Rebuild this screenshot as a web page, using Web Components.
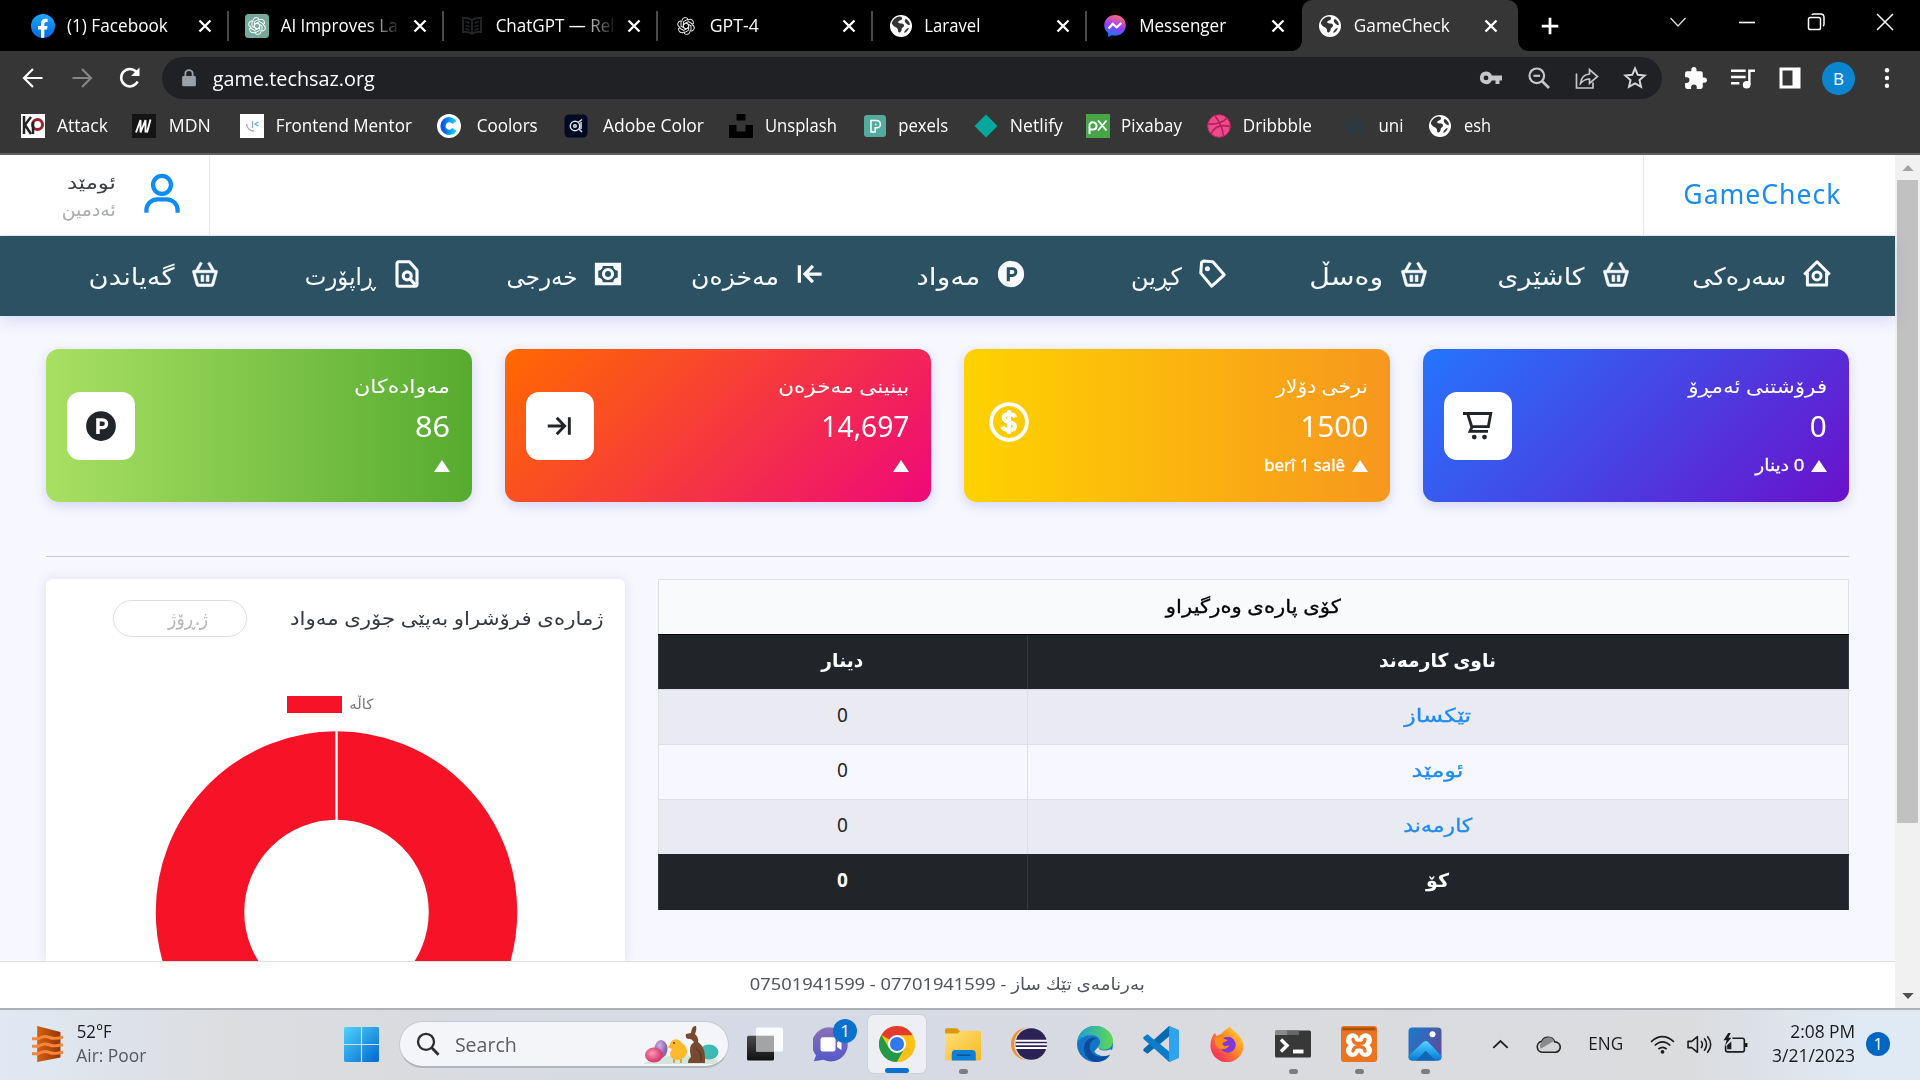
<!DOCTYPE html>
<html lang="ckb">
<head>
<meta charset="utf-8">
<title>GameCheck</title>
<style>
  body { margin: 0; width: 1920px; height: 1080px; overflow: hidden; background: #000; font-family: "Open Sans", "Noto Sans", sans-serif; }
</style>
</head>
<body>
<desk-top></desk-top>
<script>
const define = (tag, css, html) => customElements.define(tag, class extends HTMLElement {
  connectedCallback() {
    if (this.shadowRoot) return;
    this.attachShadow({ mode: 'open' }).innerHTML = `<style>*{box-sizing:border-box}${css}</style>` + (typeof html === 'function' ? html(this) : html);
  }
});
const a = (el, n, d = '') => el.getAttribute(n) ?? d;

const globe = '<circle cx="12" cy="12" r="11" fill="#fff"/><path d="M4 6.5C6 4 8.500 2.800 11 2.600c2.200.5 2.700 2 1.500 3.200-1.300 1-3 .9-3.300 2.200-.3 1.500 2 1.300 3.800 1.600 2.300.5 2.600 2.300 1.400 3.500-.9.9-1.800 1-1.800 2.500 0 1.300-.6 2.300-1.700 2.800-1.600.3-1.900-1-1.900-2.400 0-1.600-1.400-2-2.800-2.900C4.500 12 3.200 10.500 2.800 9.500 3 8.300 3.400 7.300 4 6.500zM17 5c2 1 3.600 3.100 4 5.500-1 .9-2.200.6-3-.4-.9-1.200-2-1.500-2.200-2.900C15.700 6 16.200 5.200 17 5zM19.800 14c-.6 2-2 4-4.300 5-.4-1 .1-2 .9-2.800.9-1 1.700-2 3.400-2.200z" fill="#333"/>';
const knot = c => `<g fill="none" stroke="${c}" stroke-width="1.250">${[0,60,120,180,240,300].map(r => `<path transform="rotate(${r} 12 12)" d="M12 8.200L15.300 10.100V17.300L9.500 20.600M6.800 6.800V5.500Q7.200 1.500 11 1.400Q13 1.500 14.500 3"/>`).join('')}</g>`;
const basket = '<path fill="currentColor" stroke="currentColor" stroke-width=".5" d="M21 9h-1.420l-3.712-6.496-1.736.992L17.277 9H6.723l3.146-5.504-1.737-.992L4.420 9H3a1 1 0 0 0-.965 1.263l2.799 10.264A2.005 2.005 0 0 0 6.764 22h10.473c.898 0 1.692-.605 1.930-1.475l2.799-10.263A1 1 0 0 0 21 9zm-3.764 11H6.764L4.310 11h15.380l-2.454 9zM8.800 13h2.200v5H8.800zm4.200 0h2.200v5H13z"/>';
const ICONS = {
  facebook: '<defs><linearGradient id="g" x2="0" y2="1"><stop stop-color="#1aa9f8"/><stop offset="1" stop-color="#0866e4"/></linearGradient></defs><circle cx="12" cy="12" r="12" fill="url(#g)"/><path fill="#fff" d="M10 23.800V15.500H7V12h3V9.500c0-3 1.700-4.800 4.500-4.800 1 0 2.100.2 2.100.2v3h-1.400c-1.400 0-1.900.9-1.900 1.800V12h3.200l-.5 3.500h-2.700v8.300z"/>',
  openai: '<rect width="24" height="24" rx="3.500" fill="#74a99b"/><g transform="translate(2.400 2.400) scale(.8)">' + knot('#fff') + '</g>',
  gpt: '<g transform="translate(2.400 2.400) scale(.8)">' + knot('#e8e8e8') + '</g>',
  book: '<g fill="none" stroke="#24262a" stroke-width="1.800"><path d="M12 6C9.500 4 6 3.500 3 4v14c3-.5 6.500 0 9 2 2.500-2 6-2.500 9-2V4c-3-.5-6.500 0-9 2v14M5.500 8l4 1M5.500 11.500l4 1M5.500 15l4 1M18.500 8l-4 1M18.500 11.500l-4 1M18.500 15l-4 1"/></g>',
  globe,
  messenger: '<defs><linearGradient id="g" x1=".3" x2=".6" y1="1" y2="0"><stop stop-color="#0a7cff"/><stop offset=".5" stop-color="#9a3cff"/><stop offset="1" stop-color="#ff6a70"/></linearGradient></defs><path fill="url(#g)" d="M12 1C5.900 1 1.200 5.500 1.200 11.300c0 3.400 1.500 6 3.900 7.900l.2 3.800 3.600-1.700c1 .2 2 .4 3.100.4 6.100 0 10.800-4.500 10.800-10.400S18.100 1 12 1z"/><path fill="none" stroke="#fff" stroke-width="2.200" d="M5.500 14.500l4.200-4.600 4 3.400 4.600-4.300"/>',
  x: '<path d="M6 6l12 12M18 6L6 18" stroke="#fff" stroke-width="2.600"/>',
  plus: '<path d="M12 3v18M3 12h18" stroke="#fff" stroke-width="3"/>',
  wdown: '<path d="M4.500 8l7.500 8 7.500-8" stroke="#ddd" stroke-width="1.300" fill="none"/>',
  wmin: '<path d="M4 12.500h16" stroke="#fff" stroke-width="1.600"/>',
  wmax: '<g fill="none" stroke="#fff" stroke-width="1.500"><rect x="4.500" y="7.500" width="12" height="12" rx="1.800"/><path d="M8 5q.5-1 2-1h6.500q3.500 0 3.500 3.500V14q0 1.500-1 2"/></g>',
  wx: '<path d="M4 4l16 16M20 4L4 20" stroke="#fff" stroke-width="1.500"/>',
  back: '<path d="M21.500 12H3.500M12 3l-9 9 9 9" fill="none" stroke="#fff" stroke-width="2.200"/>',
  fwd: '<path d="M2.500 12h18M12 3l9 9-9 9" fill="none" stroke="#858585" stroke-width="2.200"/>',
  reload: '<path d="M19.700 15.500A8.700 8.700 0 1 1 18.500 6" fill="none" stroke="#fff" stroke-width="2.500"/><path d="M21.500 1.500v8.500H13z" fill="#fff"/>',
  lock: '<rect x="4.500" y="9.500" width="15" height="12.500" rx="1.500" fill="#9aa0a6"/><path d="M8 10V6.500a4 4 0 0 1 8 0V10" fill="none" stroke="#9aa0a6" stroke-width="2"/>',
  key: '<path fill="#c4c6c9" fill-rule="evenodd" d="M7 5.500a6.300 6.300 0 1 0 5.900 9h3.600v3.500h4V14.500H23v-5H12.900A6.300 6.300 0 0 0 7 5.500zm0 4a2.400 2.400 0 1 1 0 4.800 2.400 2.400 0 0 1 0-4.800z"/>',
  zoom: '<g fill="none" stroke="#c4c6c9" stroke-width="2.200"><circle cx="9.800" cy="9.800" r="7.300"/><path d="M6.500 9.800h6.600"/><path d="M15 15l7 7" stroke-width="2.600"/></g>',
  share: '<g fill="none" stroke="#c4c6c9" stroke-width="1.700"><path d="M1.500 7.500V22H18v-5.500"/><path d="M5.500 17.500c.5-6 3.500-9 9-9.500V3.500l8 7-8 7V13c-4 0-6.500 1.500-9 4.500z"/></g>',
  star: '<path d="M12 2.500l2.800 6.300 6.900.7-5.200 4.600 1.500 6.700-6-3.500-6 3.500 1.500-6.700L2.300 9.500l6.900-.7z" fill="none" stroke="#d2d4d7" stroke-width="2"/>',
  puzzle: '<path fill="#fff" d="M20.500 11H19V7a2 2 0 0 0-2-2h-4V3.500a2.500 2.500 0 0 0-5 0V5H4a2 2 0 0 0-2 2v3.800h1.500a2.700 2.700 0 0 1 0 5.400H2V20a2 2 0 0 0 2 2h3.800v-1.500a2.700 2.700 0 0 1 5.400 0V22H17a2 2 0 0 0 2-2v-4h1.500a2.500 2.500 0 0 0 0-5z"/>',
  queue: '<path d="M1 4.500h14M1 10.500h14M1 16.500h8" stroke="#fff" stroke-width="2.300"/><circle cx="16" cy="18" r="3.700" fill="#fff"/><path d="M18.600 18V4.500H24" fill="none" stroke="#fff" stroke-width="2.300"/>',
  side: '<path fill="#fff" fill-rule="evenodd" d="M1.500 1.500h21v21h-21zM4.500 4.500v15h10v-15z"/>',
  dots: '<g fill="#fff"><circle cx="12" cy="3.500" r="2.400"/><circle cx="12" cy="12" r="2.400"/><circle cx="12" cy="20.500" r="2.400"/></g>',
  attack: '<rect width="24" height="24" fill="#fff"/><path d="M3 2v18M3 12l7-9M4 11l6 9" stroke="#222" stroke-width="2.500" fill="none"/><circle cx="16.500" cy="10.500" r="5" fill="none" stroke="#9c1f2d" stroke-width="3"/><path d="M12 8v12" stroke="#222" stroke-width="2.500"/>',
  mdn: '<rect width="24" height="24" fill="#141414"/><path d="M4 18.500L8.500 6v12.500L13.500 6v12.500M18.500 5.500l-3.500 13" stroke="#fff" stroke-width="1.900" fill="none"/>',
  fm: '<rect width="24" height="24" fill="#fff"/><path d="M6.500 10c.5 4 3.500 7 7.500 7M12.500 7v7" stroke="#a3a7c6" stroke-width="1.400" fill="none"/><path d="M18.500 8l-3.500 2 3.500 2" fill="none" stroke="#4cc3c9" stroke-width="1.300"/>',
  coolors: '<defs><linearGradient id="g"><stop stop-color="#0a58e8"/><stop offset="1" stop-color="#16c8ff"/></linearGradient></defs><circle cx="12" cy="12" r="12" fill="#fff"/><path d="M17.500 8.500A6.300 6.300 0 1 0 17.500 15.500" fill="none" stroke="url(#g)" stroke-width="5.200"/>',
  adobe: '<rect x=".5" y=".5" width="23" height="23" rx="4.500" fill="#000a22"/><g fill="none" stroke="#dfe3ea" stroke-width="1.500"><circle cx="11" cy="12" r="4.700"/><circle cx="11" cy="12" r="1.300"/><path d="M14 8.500l4-3M15 15l3 3M17 8v7"/></g>',
  unsplash: '<path fill="#000" d="M7.500 0h9v6.500h-9zM0 11h7.500v6.500h9V11H24v13H0z"/>',
  pexels: '<rect x="1" y="1" width="22" height="22" rx="3" fill="#52ab9d"/><path d="M8 18V6.500h5.500a3.700 3.700 0 0 1 1 7.300h-2.300V18zM12 10.500h1.500" fill="none" stroke="#fff" stroke-width="1.500"/>',
  netlify: '<path d="M12 .5L23.500 12 12 23.500.5 12z" fill="#05a89d"/>',
  pixabay: '<rect width="24" height="24" fill="#48a547"/><path d="M3.500 20V11a3.600 3.600 0 1 1 3.600 4.500H4M12 6.500l8.500 10M20.500 6.500l-8.500 10" fill="none" stroke="#fff" stroke-width="1.900"/>',
  dribbble: '<circle cx="12" cy="12" r="11.300" fill="#ea4c89" stroke="#c32361"/><path d="M8 2c5 6 7.500 12 8.500 20M1.500 10c8 .5 14-1 18.500-6M4 20c3-7 9-10 19-7.500" fill="none" stroke="#b71d58" stroke-width="1.600"/>',
  uni: '<g fill="none" stroke="#263b45" stroke-width="2"><path d="M3 9l9-4 9 3-9 4zM3 13l9 3 9-5M4 17l9 2 8-4"/></g>',
  user: '<g fill="none" stroke="currentColor" stroke-width="2.300"><ellipse cx="12" cy="7" rx="4.900" ry="4.900"/><path d="M3.500 22.200v-1.400a5.900 5.900 0 0 1 5.900-5.900h5.200a5.900 5.900 0 0 1 5.900 5.900v1.400"/></g>',
  home: '<g fill="none" stroke="currentColor" stroke-width="2.400" stroke-linejoin="round"><path d="M1.800 12.500L12 2.200l10.200 10.300M4.300 11v9.800h15.400V11"/><circle cx="12" cy="13.500" r="3.200"/></g>',
  basket,
  tag: '<path d="M2.200 3.500L3.700 2.200h7.500L21 12 11.700 21.800 2.200 12z" transform="rotate(4 12 12)" fill="none" stroke="currentColor" stroke-width="2.400" stroke-linejoin="round"/><circle cx="7.500" cy="7.800" r="2" fill="currentColor"/>',
  parking: '<path fill="currentColor" fill-rule="evenodd" d="M12 1.500a10.500 10.500 0 1 0 0 21 10.500 10.500 0 0 0 0-21zM8.600 6.500h4.600a3.900 3.900 0 0 1 0 7.800h-2.100v3.400H8.600zm2.500 2.300V12h2a1.600 1.600 0 0 0 0-3.200z"/>',
  toleft: '<path d="M3.500 5v14M21.300 12H9M14.300 5.500L8 12l6.300 6.500" fill="none" stroke="currentColor" stroke-width="2.600"/>',
  toright: '<path d="M20 4.500v15M1.500 12h13M9.200 5L16 12l-6.800 7" fill="none" stroke="currentColor" stroke-width="2.500"/>',
  cash: '<path fill="currentColor" fill-rule="evenodd" d="M1.500 3h21v18h-21zM7.800 5.500a4 4 0 0 1-3.600 3.800v5.400a4 4 0 0 1 3.600 3.800h8.400a4 4 0 0 1 3.600-3.800V9.300a4 4 0 0 1-3.600-3.800z"/><circle cx="12" cy="12" r="3.600" fill="none" stroke="currentColor" stroke-width="2.500"/>',
  report: '<g fill="none" stroke="currentColor" stroke-width="2.500"><path d="M14 2.200H5.500Q4 2.200 4 4v16q0 1.800 1.500 1.800h13q1.500 0 1.500-1.800V9z" stroke-linejoin="round"/><circle cx="12.200" cy="13.500" r="3.200"/><path d="M14.500 16l4 4.500"/></g>',
  cart: '<g fill="none" stroke="currentColor" stroke-width="2.300"><path d="M0 2h22.200L20.300 12.500H7.300M3.700 2l3.400 11-1.500 3.300H20"/></g><circle cx="9" cy="20.800" r="1.900" fill="currentColor"/><circle cx="17.200" cy="20.800" r="1.900" fill="currentColor"/>',
  dollar: '<circle cx="12" cy="12" r="10.700" fill="none" stroke="currentColor" stroke-width="2.300"/><path d="M15.700 9.200Q15.300 7.300 12 7.300q-3.200 0-3.200 2.200 0 2 3.200 2.500 3.500.6 3.500 2.500 0 2.300-3.500 2.300-3.500 0-3.900-2M12 5v14" fill="none" stroke="currentColor" stroke-width="2.500"/>',
  weather: '<defs><linearGradient id="g"><stop stop-color="#d4610d"/><stop offset="1" stop-color="#963503"/></linearGradient></defs><path d="M4 0l18 4v17L4 24z" fill="url(#g)"/><g fill="none" stroke="#f7873f" stroke-width="2"><path d="M0 8.500h5q4-2.500 8-1t11 0M0 13.500h5q4-2.500 8-1t11 0M0 18.500h5q4-2.500 8-1t11 0"/></g>',
  start: '<defs><linearGradient id="g" x2="1" y2="1"><stop stop-color="#4fd2fb"/><stop offset="1" stop-color="#0067d0"/></linearGradient></defs><path fill="url(#g)" d="M1 0h10.600v11.600H0V1q0-1 1-1zM12.400 0H23q1 0 1 1v10.600H12.400zM0 12.400h11.600V24H1q-1 0-1-1zM12.400 12.400H24V23q0 1-1 1H12.400z"/>',
  search: '<circle cx="10" cy="9.800" r="8" fill="none" stroke="#2a2c30" stroke-width="2.300"/><path d="M15.500 15.500L22.500 22.800" stroke="#2a2c30" stroke-width="2.800"/>',
  taskview: '<defs><linearGradient id="g" x2="0" y2="1"><stop stop-color="#4a4a4a"/><stop offset="1" stop-color="#111"/></linearGradient></defs><rect x="0" y="6.500" width="18" height="16.500" rx="1" fill="url(#g)"/><rect x="6" y="1" width="18" height="16" rx="1" fill="#fff" opacity=".88"/><path d="M6 6.500h12V17H6z" fill="#a3a4a5"/>',
  chat: '<defs><linearGradient id="g" x2="0" y2="1"><stop stop-color="#8a70b4"/><stop offset="1" stop-color="#5359c9"/></linearGradient></defs><path d="M12 1a11.300 11.300 0 1 1-5 21.500L.6 23.500 2 19.500A11.300 11.300 0 0 1 12 1z" fill="url(#g)"/><rect x="5" y="7.500" width="10" height="9.500" rx="1.500" fill="#fff"/><path d="M16 11l3-2.500v7.500L16 14z" fill="#fff"/>',
  chrome: '<circle cx="12" cy="12" r="12" fill="#fbc116"/><path d="M12 12L1.600 6A12 12 0 0 1 22.400 6z" fill="#e33b2e"/><path d="M1.600 6A12 12 0 0 0 12 24l5.200-9L12 12 6.800 15z" fill="#229a48"/><path d="M12 6.200h10.500A12 12 0 0 1 12 24l5-9z" fill="#fbc116"/><circle cx="12" cy="12" r="6" fill="#fff"/><circle cx="12" cy="12" r="4.700" fill="#3079ec"/>',
  folder: '<defs><linearGradient id="g" x2="1" y2="1"><stop stop-color="#ffe07a"/><stop offset="1" stop-color="#f6b91f"/></linearGradient></defs><path d="M0 2.500Q0 1.500 1 1.500h7L10.500 4v5H0z" fill="#dc9a0b"/><path d="M0 5h8.500l2-1.800H23q1 0 1 1V22q0 1-1 1H0z" fill="url(#g)"/><path d="M4.500 23v-4.500q0-2.500 2.500-2.500h11q2.500 0 2.500 2.500V23z" fill="#0e7fd6"/><path d="M8 19.500h9" stroke="#075293"/>',
  eclipse: '<ellipse cx="11" cy="12" rx="11" ry="10.800" fill="#f0922b"/><ellipse cx="13.300" cy="12" rx="11.200" ry="11.300" fill="#d6d9e2"/><circle cx="13.500" cy="12" r="10.500" fill="#2c2255"/><path d="M3 9.800h21M3 12.200h21M3 14.600h21" stroke="#fff" stroke-width="1.300"/>',
  edge: '<defs><linearGradient id="g"><stop stop-color="#1c9ed9"/><stop offset="1" stop-color="#5fd951"/></linearGradient></defs><circle cx="12" cy="12" r="12" fill="#1574c8"/><path d="M.1 11C.8 4.500 5.500 0 12 0c7 0 12 5 12 9.800 0 4-3 6-6 6-2.800 0-3.800-1.200-3.800-2 0-.9 1.200-1.300 1.200-3.300 0-2.300-2.400-4.300-5.700-4.300C5 6.200 1.500 8.500.1 11z" fill="url(#g)"/><path d="M8.500 14c0-3 1.800-5.200 5-5.500-3-1.500-7-.4-8.500 4C3.500 17.500 7 24 13.500 24c4 0 7.500-2.500 8.500-5-7 3.500-13.500.5-13.500-5z" fill="#0c4c9d"/><path d="M14.200 13.800c0 1.800 2.800 3.800 8.600 1.700L24.500 19l-2.500 0c-4 2-8.500 1-10.500-2z" fill="#d9dbe0"/>',
  vscode: '<path d="M17.500 0L24 2.800v18.400L17.500 24 5.500 12z" fill="#2595dd"/><path d="M17.500 0v6.500L3 18.500.3 16.600v-1.200z" fill="#0868b0"/><path d="M17.500 24v-6.500L3 5.500.3 7.400v1.200z" fill="#0e7cc8"/><path d="M17.500 7v10l-6-5z" fill="#dadbde"/><path d="M17.500 0L24 2.800v18.400L17.500 24z" fill="#30a3ee"/>',
  firefox: '<defs><linearGradient id="g" x1="1" x2="0" y2="1"><stop stop-color="#ffe23a"/><stop offset=".45" stop-color="#ff8a26"/><stop offset="1" stop-color="#f4106f"/></linearGradient></defs><path d="M14 .3c1 2 3 3.200 5 5 2 2 4 4.500 4 8A11 11 0 0 1 1 13C1 9.500 2 6.500 4 4.500l1 2.200L8.500 5c1-2 3-2.500 4-3.500z" fill="url(#g)"/><circle cx="12.500" cy="12.500" r="5.300" fill="#8037dc"/><path d="M3.500 8c3-1 5-.5 6.500.5l2.500.8c-1 1.500-3 1-3.500 2.500.3 1.500 2 2 4.500 1-1 3-7 4-9 0z" fill="#ff8b21"/>',
  term: '<rect x="0" y="3" width="24" height="18" rx="1" fill="#383838"/><path d="M0 3h16v3H0z" fill="#8a8a8a"/><path d="M8 3h8v3H8z" fill="#666"/><path d="M4 9l4 4-4 4" fill="none" stroke="#fff" stroke-width="2.300"/><path d="M12 17h7" stroke="#fff" stroke-width="2.600"/>',
  xampp: '<rect width="24" height="24" rx="2" fill="#eb7420"/><rect x="1" y="1" width="22" height="2" fill="#a9500e"/><g fill="#fff"><circle cx="7.700" cy="9.300" r="4.400"/><circle cx="16.300" cy="9.300" r="4.400"/><circle cx="7.700" cy="16.300" r="4.400"/><circle cx="16.300" cy="16.300" r="4.400"/><path d="M6 9h12v7H6z"/></g><path d="M8 9q.3 2.800 4 2.800T16 9M8 16.700q.3-2.900 4-2.900t4 2.900M12 11.500v2.500" fill="none" stroke="#eb7420" stroke-width="2.200" stroke-linecap="round"/>',
  photos: '<defs><linearGradient id="g" x2="1" y2=".6"><stop stop-color="#167cd0"/><stop offset="1" stop-color="#5b4e9d"/></linearGradient><linearGradient id="h" x2="0" y2="1"><stop stop-color="#4fd5ff"/><stop offset="1" stop-color="#0878d5"/></linearGradient></defs><rect x="1" y="1" width="22" height="22" rx="2.500" fill="url(#g)"/><path d="M1 20l10-9.500q1.500-1 3 0L23 20q0 3-2.500 3h-17Q1 23 1 20z" fill="url(#h)"/><path d="M6 23l6.500-6.500L19 23z" fill="#0f67b5"/><circle cx="17" cy="5.500" r="2" fill="#fff"/>',
  up: '<path d="M4.500 15.500l7.500-7 7.500 7" stroke="#222" stroke-width="2" fill="none"/>',
  cloud: '<path d="M6.500 19.500A5.300 5.300 0 0 1 5.500 9 6.800 6.800 0 0 1 18 9.500a5 5 0 0 1 .5 10z" fill="#d5d6d8" stroke="#222" stroke-width="1.500"/><path d="M5.500 10a6.500 6.500 0 0 1 12-1.500l-6 3.500L4.500 16q-2-4 1-6z" fill="#8b8b8b"/>',
  wifi: '<g fill="none" stroke="#1c1d1f" stroke-width="1.500"><path d="M1 9.500q11-10 22 0M4.500 13q7.500-7 15 0M8 16.500q4-3.500 8 0"/></g><circle cx="12" cy="19" r="1.800" fill="#1c1d1f"/>',
  sound: '<g fill="none" stroke="#1c1d1f" stroke-width="1.500" stroke-linejoin="round"><path d="M1 9h3.500L10 4.500v15L4.500 15H1zM13.500 8.500q2.500 3.500 0 7M16.500 6q4.500 6 0 12M19.500 4q6.500 8 0 16"/></g>',
  battery: '<g fill="none" stroke="#1c1d1f" stroke-width="1.600"><path d="M9 6h9.500q2 0 2 2v9q0 2-2 2h-14q-2 0-2-2v-4"/></g><path d="M21 10.500h2.500v4H21zM5 1L.5 8h3L2 13l6-7.500H5.200L7.500 1z" fill="#1c1d1f"/><path d="M4 12.500L8 9v7.500H4z" fill="#1c1d1f"/>',
  scrup: '<path d="M4.500 16l7.500-8 7.500 8z" fill="#a3a3a3"/>',
  scrdown: '<path d="M4.500 8l7.500 8 7.500-8z" fill="#505050"/>'
};

define('ui-icon', ':host{display:inline-block;flex:none}svg{display:block}', el => {
  const w = a(el, 'w', a(el, 's', 24)), h = a(el, 's', 24);
  return `<svg width="${w}" height="${h}" viewBox="0 0 24 24" preserveAspectRatio="none">${ICONS[a(el, 'name')]}</svg>`;
});

define('browser-tab', `
  :host{display:flex;flex:none;width:214.500px;height:51px;align-items:center;position:relative;color:#fff;font-size:17.500px}
  ui-icon.i{margin-left:16px}
  .t{display:flex;margin-left:12px;width:121px;padding:6px 0 5px;overflow:hidden}
  :host([fade]) .t{-webkit-mask-image:linear-gradient(90deg,#000 70%,transparent 100%);mask-image:linear-gradient(90deg,#000 70%,transparent 100%)}
  ui-icon.x{margin-left:6.500px}
  .s{width:2px;height:30px;background:#4a4a4a;margin-left:auto}
  :host([active]){width:216px;background:#363636;border-radius:10px 10px 0 0}
  :host([active])::before,:host([active])::after{content:"";position:absolute;bottom:0;left:-10px;width:10px;height:10px;background:radial-gradient(circle at 0 0,transparent 9.500px,#363636 10px)}
  :host([active])::after{left:auto;right:-10px;background:radial-gradient(circle at 100% 0,transparent 9.500px,#363636 10px)}
  :host([active]) .s,:host([nosep]) .s{display:none}
  :host([active]) .t{width:120px}`,
  el => `<ui-icon class="i" name="${a(el,'icon')}"></ui-icon><div class="t"><fit-text w="${a(el,'w')}"><slot></slot></fit-text></div><ui-icon class="x" name="x" s="22"></ui-icon><span class="s"></span>`);

define('tab-strip', `
  :host{display:flex;height:51px;background:#000;padding-left:14.500px;align-items:center}
  .plus{margin-left:21px}.win{display:flex;margin-left:auto;gap:45px;padding:0 23px 8px 0}`, `
  <browser-tab icon="facebook" w="101">(1) Facebook</browser-tab>
  <browser-tab icon="openai" w="117" fade>AI Improves La</browser-tab>
  <browser-tab icon="book" w="119" fade>ChatGPT — Rel</browser-tab>
  <browser-tab icon="gpt" w="49">GPT-4</browser-tab>
  <browser-tab icon="globe" w="56">Laravel</browser-tab>
  <browser-tab icon="messenger" w="87" nosep>Messenger</browser-tab>
  <browser-tab icon="globe" w="96" active>GameCheck</browser-tab>
  <ui-icon class="plus" name="plus" s="22"></ui-icon>
  <div class="win"><ui-icon name="wdown"></ui-icon><ui-icon name="wmin"></ui-icon><ui-icon name="wmax"></ui-icon><ui-icon name="wx"></ui-icon></div>`);

define('tool-bar', `
  :host{display:flex;height:54px;background:#363636;align-items:center;padding:0 21px;color:#fff}
  .nav{display:flex;gap:24.500px;align-items:center}
  .omni{display:flex;align-items:center;width:1500px;height:42px;border-radius:21px;background:#202124;margin-left:20px;padding:0 15px 0 16px;font-size:20.500px;flex:none}
  .omni fit-text{margin-left:13px;margin-top:1px}.act{display:flex;gap:24px;margin-left:auto}
  .right{display:flex;align-items:center;margin-left:20.500px;gap:22.500px}
  .av{width:33px;height:33px;border-radius:50%;background:#0a86d1;display:grid;place-items:center;font-size:17px;margin:0 -2px 0 -2px}`, `
  <div class="nav"><ui-icon name="back"></ui-icon><ui-icon name="fwd"></ui-icon><ui-icon name="reload"></ui-icon></div>
  <div class="omni"><ui-icon name="lock" w="22" s="20"></ui-icon><fit-text w="162">game.techsaz.org</fit-text>
    <div class="act"><ui-icon name="key"></ui-icon><ui-icon name="zoom"></ui-icon><ui-icon name="share"></ui-icon><ui-icon name="star"></ui-icon></div></div>
  <div class="right"><ui-icon name="puzzle" s="25"></ui-icon><ui-icon name="queue" s="25"></ui-icon><ui-icon name="side" s="24"></ui-icon><div class="av">B</div><ui-icon name="dots" s="22"></ui-icon></div>`);

define('book-mark', `:host{display:flex;flex:none;align-items:center;font-size:17.500px;margin-left:var(--m,24px)}fit-text{margin-left:var(--g,12px)}`,
  el => `<ui-icon name="${a(el,'icon')}"></ui-icon><fit-text w="${a(el,'w')}"><slot></slot></fit-text>`);
define('bookmarks-bar', ':host{display:flex;height:50px;background:#363636;border-bottom:2px solid #606060;color:#fff;align-items:center;padding-bottom:6px}', `
  <book-mark icon="attack" w="51" style="--m:21px">Attack</book-mark>
  <book-mark icon="mdn" w="42" style="--m:24px;--g:12.500px">MDN</book-mark>
  <book-mark icon="fm" w="136" style="--m:29.500px">Frontend Mentor</book-mark>
  <book-mark icon="coolors" w="61" style="--m:25px;--g:16px">Coolors</book-mark>
  <book-mark icon="adobe" w="101" style="--m:25.500px;--g:15.500px">Adobe Color</book-mark>
  <book-mark icon="unsplash" w="72" style="--m:24.500px">Unsplash</book-mark>
  <book-mark icon="pexels" w="50" style="--m:26px">pexels</book-mark>
  <book-mark icon="netlify" w="53" style="--m:25px">Netlify</book-mark>
  <book-mark icon="pixabay" w="61" style="--m:23px">Pixabay</book-mark>
  <book-mark icon="dribbble" w="69" style="--m:24.500px">Dribbble</book-mark>
  <book-mark icon="uni" w="25" style="--m:30px">uni</book-mark>
  <book-mark icon="globe" w="27" style="--m:25px">esh</book-mark>`);

define('page-header', `
  :host{display:flex;height:81px;background:#fff;border-bottom:1px solid #e8ebf2}
  .brand{width:252px;border-left:1px solid #e9ebf0;display:flex;align-items:center;color:#1a8cf0;font-size:27px;padding:0 54px 4px 0}
  .user{width:210px;margin-right:auto;display:flex;align-items:center;padding-right:25px;gap:24px;border-right:1px solid #e9ebf0}
  .names{display:flex;flex-direction:column;gap:9px;align-items:flex-start;color:#3c4043;font-size:18px}.names .r{color:#a9abad}
  .user ui-icon{color:#0d8cf7;margin-bottom:2px}`, `
  <div class="brand"><fit-text w="158" sp="1">GameCheck</fit-text></div>
  <div class="user"><ui-icon name="user" w="44" s="44"></ui-icon><div class="names"><fit-text w="49">ئومێد</fit-text><fit-text class="r" w="54">ئەدمین</fit-text></div></div>`);

define('nav-item', ':host{display:flex;flex:none;width:201.500px;align-items:center;gap:15.500px;color:#f7fbff;font-size:24px}ui-icon{margin-bottom:5px}fit-text{margin-bottom:1px}',
  el => `<ui-icon name="${a(el,'icon')}" w="30" s="30"></ui-icon><fit-text w="${a(el,'w')}"><slot></slot></fit-text>`);
define('nav-bar', ':host{display:flex;height:80px;background:#2b5162;padding-right:63px;box-shadow:0 5px 14px rgba(90,80,200,.17);position:relative}', `
  <nav-item icon="home" w="94">سەرەکی</nav-item><nav-item icon="basket" w="87">کاشێری</nav-item><nav-item icon="basket" w="74">وەسڵ</nav-item>
  <nav-item icon="tag" w="51">کڕین</nav-item><nav-item icon="parking" w="64">مەواد</nav-item><nav-item icon="toleft" w="88">مەخزەن</nav-item>
  <nav-item icon="cash" w="71">خەرجی</nav-item><nav-item icon="report" w="71">ڕاپۆرت</nav-item><nav-item icon="basket" w="86">گەیاندن</nav-item>`);

define('stat-card', `
  :host{display:flex;width:426px;height:153px;border-radius:13px;background:var(--bg);padding:0 22px 0 21px;justify-content:space-between;color:#fff;box-shadow:0 4px 12px rgba(90,80,200,.2)}
  .c{display:flex;flex-direction:column;align-items:flex-start;padding-top:25px}
  .t{font-size:19px;height:24px;display:flex;align-items:center}.v{font-size:29px;height:56px;display:flex;align-items:center;padding-bottom:1px}
  .s{display:flex;align-items:center;gap:7px;font-size:16.500px;height:22px}.s svg{display:block;margin-top:1px}.s fit-text{-webkit-text-stroke:.3px}
  .b{width:68px;height:68px;border-radius:13px;background:#fff;color:#212529;display:grid;place-items:center;margin-top:42.500px}
  .b.n{background:none;color:#fff;width:47px;height:60px}`,
  el => `<div class="c"><div class="t"><fit-text w="${a(el,'w')}">${a(el,'label')}</fit-text></div><div class="v"><fit-text w="${a(el,'vw')}">${a(el,'value')}</fit-text></div>
  <div class="s"><svg width="16" height="12"><path d="M8 0L16 12H0z" fill="#fff"/></svg>${el.hasAttribute('sub') ? `<fit-text w="${a(el,'sw')}">${a(el,'sub')}</fit-text>` : ''}</div></div>
  <div class="b ${el.hasAttribute('bare') ? 'n' : ''}"><ui-icon name="${a(el,'icon')}" s="${a(el,'is',30)}"></ui-icon></div>`);

define('money-table', `
  :host{display:block;width:1191px;height:331px;flex:none}
  .cap{height:55px;background:#f9fafc;border:1px solid #dee2e6;border-bottom:0;display:flex;align-items:center;justify-content:center;font-size:19px;color:#000;-webkit-text-stroke:.3px;padding-bottom:1px}
  .r{display:flex;height:55px;font-size:19px;color:#212529;border-top:1px solid #dddfe8}
  .r>div{display:flex;align-items:center;justify-content:center;border:1px solid #dddfe8;border-width:0 1px 0 0;padding:0 0 3px 1px}
  .r>div:first-child{width:821px}.r>div:last-child{width:370px;border-left:1px solid #dddfe8;padding:0 1px 4px 0}
  .o{background:#e9eaf2}.e{background:#f6f7ff}.o>div:first-child,.e>div:first-child{color:#1f8bf3;-webkit-text-stroke:.3px}
  .d{background:#212529;color:#fff;font-weight:700;border-top:1px solid #000}.d>div,.d>div:last-child{border-color:#373b3e}
  .r>div:first-child{padding:0 1px 3px 0}
  .d.f{height:56px;border-top-color:#212529}.d.f>div{padding-bottom:5px}`, `
  <div class="cap"><fit-text w="175">کۆی پارەی وەرگیراو</fit-text></div>
  <div class="r d"><div><fit-text w="117">ناوی کارمەند</fit-text></div><div><fit-text w="42">دینار</fit-text></div></div>
  <div class="r o"><div><fit-text w="67">تێکساز</fit-text></div><div>0</div></div>
  <div class="r e"><div><fit-text w="52">ئومێد</fit-text></div><div>0</div></div>
  <div class="r o"><div><fit-text w="69">کارمەند</fit-text></div><div>0</div></div>
  <div class="r d f"><div><fit-text w="23">کۆ</fit-text></div><div>0</div></div>`);

define('chart-panel', `
  :host{display:flex;flex-direction:column;width:579px;height:382px;background:#fff;border-radius:6px 6px 0 0;overflow:hidden;flex:none}
  .h{display:flex;align-items:center;padding:21px 21.500px 0 0;font-size:19px;color:#343a40;gap:43.500px}
  .in{width:134px;height:37px;border:1px solid #dadde0;border-radius:19px;display:flex;align-items:center;padding-right:37px;color:#b3b5b8}
  .lg{display:flex;direction:ltr;align-items:center;gap:7px;margin:59px auto 0 241px;height:17px;font-size:14px;color:#777}
  .lg i{width:55px;height:17px;background:#f61227}.lg fit-text{margin-bottom:2px}
  svg{display:block;margin-top:17.500px;flex:none}`, `
  <div class="h"><fit-text w="313.500">ژمارەی فرۆشراو بەپێی جۆری مەواد</fit-text><div class="in"><fit-text w="40">ژ.ڕۆژ</fit-text></div></div>
  <div class="lg"><i></i><fit-text w="24">کاڵە</fit-text></div>
  <svg width="579" height="370"><circle cx="290.500" cy="181" r="136.500" fill="none" stroke="#f61227" stroke-width="88.500"/><path d="M290.500 0v92" stroke="#fff" stroke-width="2.400"/></svg>`);

define('web-page', `
  :host{display:flex;height:853px;background:#f1f1f1}
  .p{direction:rtl;width:1895px;background:#f6f7ff;display:flex;flex-direction:column;font-family:"Noto Sans","DejaVu Sans",sans-serif}
  .cards{display:flex;gap:33px;padding:33px 46px 0}
  .hr{height:1px;background:#c9ccd3;margin:54px 46px 22px}
  .row{display:flex;gap:33px;padding:0 46px}
  chart-panel{box-shadow:0 0 12px rgba(90,80,200,.14)}
  .f{height:47px;background:#fff;border-top:1px solid #dee0e8;display:flex;align-items:center;justify-content:center;color:#50565c;font-size:17px;position:relative;padding-bottom:3px}
  .sb{width:25px;display:flex;flex-direction:column;align-items:center}
  .sb ui-icon{height:18px}.th{width:21px;height:643px;background:#c1c1c1;margin:3px 0 auto}`, `
  <div class="p"><page-header></page-header><nav-bar></nav-bar>
  <div class="cards">
    <stat-card style="--bg:linear-gradient(135deg,#2575fc,#6a11cb)" label="فرۆشتنی ئەمڕۆ" w="139" value="0" vw="17" sub="0 دینار" sw="49" icon="cart"></stat-card>
    <stat-card style="--bg:linear-gradient(90deg,#ffd200,#f7971e)" label="نرخی دۆلار" w="92" value="1500" vw="68" sub="berî 1 salê" sw="81" icon="dollar" is="40" bare></stat-card>
    <stat-card style="--bg:linear-gradient(135deg,#ff6a00,#ee0979)" label="بینینی مەخزەن" w="131" value="14,697" vw="88" icon="toright" is="28"></stat-card>
    <stat-card style="--bg:linear-gradient(90deg,#a8e063,#56ab2f)" label="مەوادەکان" w="96" value="86" vw="35" icon="parking" is="34"></stat-card>
  </div><div class="hr"></div>
  <div class="row"><money-table></money-table><chart-panel></chart-panel></div>
  <div class="f"><fit-text w="395">بەرنامەی تێك ساز - 07701941599 - 07501941599</fit-text></div></div>
  <div class="sb"><ui-icon name="scrup" w="18" s="18" style="margin-top:4px"></ui-icon><div class="th"></div><ui-icon name="scrdown" w="18" s="18" style="margin-bottom:3px"></ui-icon></div>`);

define('task-icon', `
  :host{display:flex;width:58px;height:58px;margin:0 4px;align-items:center;justify-content:center;position:relative;border-radius:6px;flex:none}
  :host([on]){background:#edeff4;box-shadow:0 0 0 1px #cfd1d8}
  .d{position:absolute;bottom:-1px;left:25px;width:9px;height:5px;border-radius:3px;background:#7b7d80}
  :host([on]) .d{left:17px;width:24px;bottom:0;background:#0a72ce}
  .n{position:absolute;left:31px;top:4px;width:24px;height:24px;border-radius:50%;background:#0a72ce;color:#fff;font-size:17px;line-height:24px;text-align:center}`,
  el => `<ui-icon name="${a(el,'name')}" s="36"></ui-icon>${el.hasAttribute('run') || el.hasAttribute('on') ? '<span class="d"></span>' : ''}${el.hasAttribute('badge') ? '<span class="n">1</span>' : ''}`);

define('task-bar', `
  :host{display:flex;height:72px;border-top:2px solid #adb1b5;align-items:center;padding-bottom:2px;background:linear-gradient(90deg,#dfe9f4 0,#dcdddf 12%,#d9dbdf 22%,#d5dae6 38%,#d7dae4 50%,#dadbde 62%,#dbdcde 88%,#dfeaf5 97%);color:#1b1c1e;font-size:17.500px}
  .w{display:flex;gap:13.500px;margin-left:32px;width:312px;align-items:center}.w>div,.clk{display:flex;flex-direction:column;gap:7px;margin-bottom:1px}.g{color:#55585c}
  .se{display:flex;width:330px;height:47px;margin:0 4px 0 20px;border-radius:24px;background:#f3f5f9;border:1px solid #c5c9d3;border-bottom:2px solid #b0b3bb;align-items:center;padding-left:16px;font-size:19.500px;overflow:hidden;color:#5b5e63}
  .se fit-text{margin-left:15px;margin-top:2px}.se svg{margin-left:auto;align-self:flex-end;margin-right:6px}
  .tray{display:flex;align-items:center;margin-left:31px}
  .clk{align-items:flex-end;margin-left:24px}
  .nb{width:24px;height:24px;border-radius:50%;background:#0067c0;color:#fff;font-size:16px;line-height:24px;text-align:center;margin-left:11px}`, `
  <div class="w"><ui-icon name="weather" w="31" s="36"></ui-icon><div><fit-text w="35">52°F</fit-text><fit-text class="g" w="70">Air: Poor</fit-text></div></div>
  <ui-icon name="start" w="35" s="35"></ui-icon>
  <div class="se"><ui-icon name="search" s="24"></ui-icon><fit-text w="62">Search</fit-text>
   <svg width="80" height="41"><defs><radialGradient id="p" cx=".4" cy=".4"><stop stop-color="#f99cb8"/><stop offset="1" stop-color="#d93d75"/></radialGradient><radialGradient id="v" cx=".4" cy=".3"><stop stop-color="#cdb3df"/><stop offset="1" stop-color="#9063b1"/></radialGradient></defs>
   <path d="M2 38q30-14 74-3v4H2z" fill="#d3e6dc"/><ellipse cx="19" cy="24" rx="6.500" ry="9" fill="url(#v)"/><ellipse cx="12" cy="30" rx="9" ry="7.500" fill="url(#p)"/><ellipse cx="67" cy="27" rx="9.500" ry="7.500" fill="#3fb9b4"/>
   <path d="M28 20a6 6 0 0 1 11-3q7 5 6 11-2 7-10 7-7-1-7-7l2-4-5-2z" fill="#ffb92e"/><circle cx="32" cy="18" r="1" fill="#5a3b12"/><path d="M32 34v4M39 34v4" stroke="#e78a16" stroke-width="1.500"/>
   <path d="M52 17q-3-4-6-3-3-1-2-5l5-1Q50 0 54 1q1 3-1 8 4 4 3 8 7 5 7 15v6H46q0-4 3-6-2-8 0-12z" fill="#774a30"/><path d="M54 24q6 2 5 12" stroke="#54301d" fill="none"/></svg></div>
  <task-icon name="taskview" style="margin-left:3px"></task-icon><task-icon name="chat" badge></task-icon><task-icon name="chrome" on></task-icon><task-icon name="folder" run></task-icon><task-icon name="eclipse"></task-icon><task-icon name="edge"></task-icon><task-icon name="vscode"></task-icon><task-icon name="firefox"></task-icon><task-icon name="term" run></task-icon><task-icon name="xampp" run></task-icon><task-icon name="photos" run></task-icon>
  <div class="tray"><ui-icon name="up" s="23"></ui-icon><ui-icon name="cloud" s="25" style="margin-left:24px"></ui-icon><fit-text w="35" style="margin-left:27px">ENG</fit-text><ui-icon name="wifi" s="25" style="margin-left:27px"></ui-icon><ui-icon name="sound" s="25" style="margin-left:12px"></ui-icon><ui-icon name="battery" s="25" style="margin-left:11px"></ui-icon>
  <div class="clk"><fit-text w="65">2:08 PM</fit-text><fit-text w="83">3/21/2023</fit-text></div><div class="nb">1</div></div>`);

define('desk-top', ':host{display:flex;flex-direction:column;width:1920px;height:1080px}',
  '<tab-strip></tab-strip><tool-bar></tool-bar><bookmarks-bar></bookmarks-bar><web-page></web-page><task-bar></task-bar>');

/* A one-line label squeezed or stretched to the width given in "w". */
customElements.define('fit-text', class extends HTMLElement {
  connectedCallback() {
    if (this.shadowRoot) return;
    this.attachShadow({ mode: 'open' }).innerHTML = `<style>:host{display:flex;flex:none;justify-content:center;width:${a(this,'w')}px;line-height:1}span{flex:none;display:block;white-space:nowrap;letter-spacing:${a(this,'sp',0)}px}</style><span><slot></slot></span>`;
    const s = this.shadowRoot.querySelector('span'), n = s.getBoundingClientRect().width;
    if (n) s.style.transform = `scaleX(${(a(this, 'w') / n).toFixed(4)})`;
  }
});
</script>
</body>
</html>
